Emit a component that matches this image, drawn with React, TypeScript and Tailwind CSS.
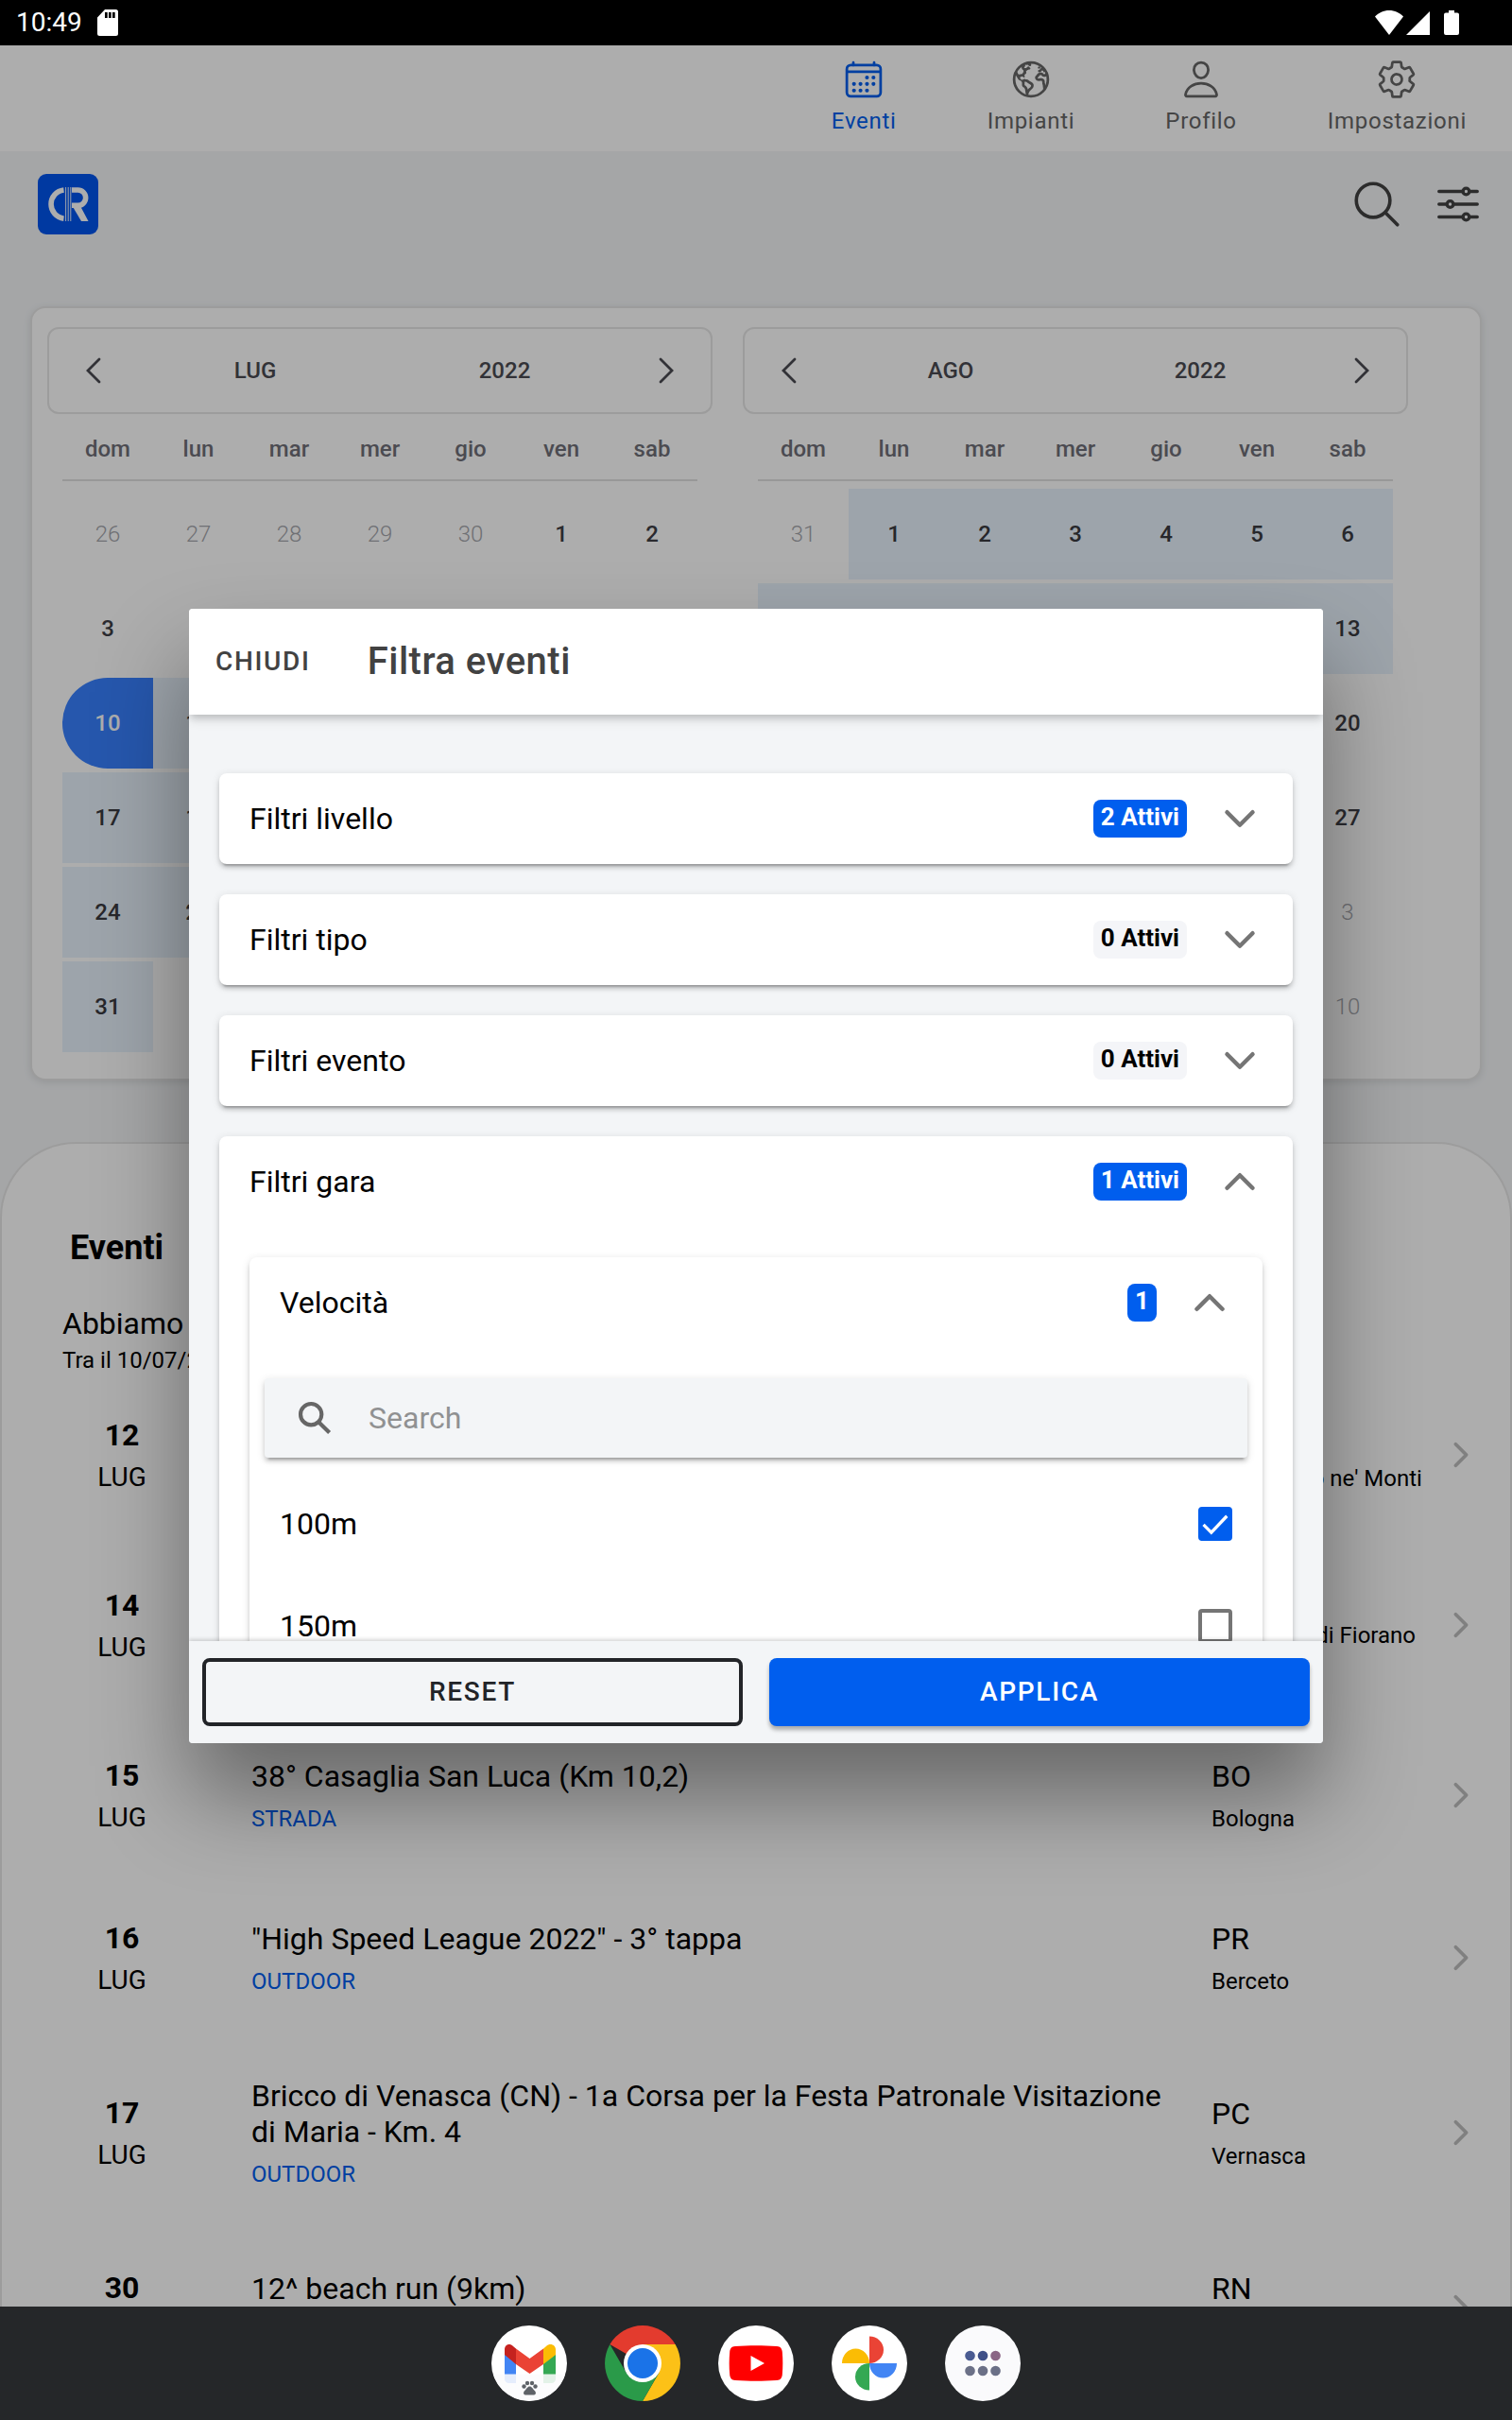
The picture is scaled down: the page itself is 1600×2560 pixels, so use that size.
import { useState, type ReactNode } from "react";
import {
  IoCalendarOutline,
  IoChevronDown,
  IoChevronForward,
  IoChevronUp,
  IoEarthOutline,
  IoOptionsOutline,
  IoPersonOutline,
  IoSearchOutline,
  IoSearchSharp,
  IoSettingsOutline
} from "react-icons/io5";

type DayKind = "out" | "in" | "range" | "start";

type Month = {
  label: string;
  year: string;
  days: number[];
  kinds: DayKind[];
};

const tabs = [
  { label: "Eventi", icon: IoCalendarOutline, active: true },
  { label: "Impianti", icon: IoEarthOutline, active: false },
  { label: "Profilo", icon: IoPersonOutline, active: false },
  { label: "Impostazioni", icon: IoSettingsOutline, active: false }
];

const weekdays = ["dom", "lun", "mar", "mer", "gio", "ven", "sab"];

const fill = (count: number, kind: DayKind): DayKind[] => Array(count).fill(kind);
const span = (from: number, to: number) => Array.from({ length: to - from + 1 }, (_, i) => from + i);

const months: Month[] = [
  {
    label: "LUG",
    year: "2022",
    days: [...span(26, 30), ...span(1, 31), ...span(1, 6)],
    kinds: [...fill(5, "out"), ...fill(9, "in"), "start", ...fill(21, "range"), ...fill(6, "out")]
  },
  {
    label: "AGO",
    year: "2022",
    days: [31, ...span(1, 31), ...span(1, 10)],
    kinds: ["out", ...fill(13, "range"), ...fill(18, "in"), ...fill(10, "out")]
  }
];

const dayStyles: Record<DayKind, string> = {
  out: "font-light text-[#a4a5ab]",
  in: "font-medium text-[#3f3f46]",
  range: "bg-[#e7f2fd] font-medium text-[#3a3a40]",
  start: "rounded-l-full bg-[#3880ff] font-medium text-white"
};

const events = [
  { day: "12", title: "Meeting Città di Castelnovo", kind: "OUTDOOR", province: "RE", place: "Castelnovo ne' Monti" },
  { day: "14", title: "Trofeo delle Ceramiche", kind: "STRADA", province: "MO", place: "Spezzano di Fiorano Modenese" },
  { day: "15", title: "38° Casaglia San Luca (Km 10,2)", kind: "STRADA", province: "BO", place: "Bologna" },
  { day: "16", title: '"High Speed League 2022" - 3° tappa', kind: "OUTDOOR", province: "PR", place: "Berceto" },
  {
    day: "17",
    title: "Bricco di Venasca (CN) - 1a Corsa per la Festa Patronale Visitazione di Maria - Km. 4",
    kind: "OUTDOOR",
    province: "PC",
    place: "Vernasca"
  },
  { day: "30", title: "12^ beach run (9km)", kind: "STRADA", province: "RN", place: "Rimini" }
];

const filters = [
  { label: "Filtri livello", active: 2 },
  { label: "Filtri tipo", active: 0 },
  { label: "Filtri evento", active: 0 }
];

const cardShadow =
  "shadow-[0_6px_2px_-4px_rgba(0,0,0,0.2),0_4px_4px_0_rgba(0,0,0,0.14),0_2px_10px_0_rgba(0,0,0,0.12)]";

function StatusBar() {
  return (
    <div className="flex h-12 shrink-0 items-center bg-black pl-[17px] pr-14 text-white">
      <span className="text-[28px] leading-8">10:49</span>
      <svg className="ml-4 h-7 w-[22px]" viewBox="0 0 22 28" fill="currentColor">
        <path
          fillRule="evenodd"
          d="M8 0h11.500a2.500 2.500 0 0 1 2.500 2.500v23a2.500 2.500 0 0 1-2.500 2.500h-17A2.500 2.500 0 0 1 0 25.500V8.500zM8 3v6h2.700V3zm4 0v6h2.700V3zm4 0v6h2.700V3z"
        />
      </svg>
      <div className="ml-auto flex items-center gap-[3px]">
        <svg className="h-[26px] w-[30px]" viewBox="0 0 30 26" fill="currentColor">
          <path d="M15 0C9 0 4 2.400 0 6.500L15 26 30 6.500C26 2.400 21 0 15 0z" />
        </svg>
        <svg className="h-[26px] w-[25px]" viewBox="0 0 25 26" fill="currentColor">
          <path d="M25 1v25H0z" />
        </svg>
        <svg className="ml-3 h-[26px] w-4" viewBox="0 0 16 26" fill="currentColor">
          <path d="M5 0h6v2.500h3A2 2 0 0 1 16 4.500V24a2 2 0 0 1-2 2H2a2 2 0 0 1-2-2V4.500a2 2 0 0 1 2-2h3z" />
        </svg>
      </div>
    </div>
  );
}

function Logo() {
  return (
    <svg className="size-16" viewBox="0 0 64 64" role="img" aria-label="Calendario Running">
      <rect width="64" height="64" rx="9" fill="#0055ee" />
      <g fill="none" stroke="#fff">
        <path d="M27.500 17A15.200 15.200 0 0 0 27.500 47.200" strokeWidth="5.600" />
        <path d="M29.600 14v36M32.200 14v36M34.800 14v36" strokeWidth="0.900" />
        <path d="M36 17h6.500a8 8 0 0 1 0 16.300H36" strokeWidth="5.600" />
      </g>
      <path d="M36 33h8.500L53.500 50H46z" fill="#fff" />
    </svg>
  );
}

function NavBar() {
  return (
    <nav className="flex h-28 shrink-0 justify-end bg-white">
      {tabs.map(({ label, icon: Icon, active }) => (
        <a
          key={label}
          href="#"
          className={`flex flex-col items-center px-12 pt-3.5 ${active ? "text-[#005eee]" : "text-[#666]"}`}
        >
          <Icon className="size-11" />
          <span className="mt-2 text-2xl leading-7 tracking-[0.03em]">{label}</span>
        </a>
      ))}
    </nav>
  );
}

function Arrow({ back }: { back?: boolean }) {
  return (
    <svg className="h-7 w-4" viewBox="0 0 16 28" fill="none" stroke="currentColor" strokeWidth="2.800" strokeLinecap="round">
      <path d={back ? "M14 2L2 14l12 12" : "M2 2l12 12L2 26"} />
    </svg>
  );
}

function MonthCalendar({ month }: { month: Month }) {
  const weeks = span(0, 5).map((w) => span(w * 7, w * 7 + 6));

  return (
    <section className="min-w-0 max-w-[704px] flex-1">
      <div className="mb-px flex h-[92px] items-center rounded-xl border-2 border-[#e6e6e6] text-2xl font-medium text-[#4b4b52]">
        <button className="flex h-full w-[86px] items-center justify-center pl-2" aria-label="Mese precedente">
          <Arrow back />
        </button>
        <button className="h-full flex-1">{month.label}</button>
        <button className="h-full flex-1">{month.year}</button>
        <button className="flex h-full w-[86px] items-center justify-center pr-2" aria-label="Mese successivo">
          <Arrow />
        </button>
      </div>
      <div className="px-4">
        <table className="w-full table-fixed border-separate border-spacing-x-0 border-spacing-y-1 text-2xl">
          <thead>
            <tr>
              {weekdays.map((day) => (
                <th key={day} className="p-0 pb-1 font-medium text-[#6f6f78]">
                  <div className="flex h-[66px] items-center justify-center border-b-2 border-[#e0e0e0]">{day}</div>
                </th>
              ))}
            </tr>
          </thead>
          <tbody>
            {weeks.map((week) => (
              <tr key={week[0]}>
                {week.map((i) => (
                  <td key={i} className={`h-24 p-0 text-center ${dayStyles[month.kinds[i]]}`}>
                    {month.days[i]}
                  </td>
                ))}
              </tr>
            ))}
          </tbody>
        </table>
      </div>
    </section>
  );
}

function EventList() {
  return (
    <section className="mt-[65px] rounded-t-[80px] border-2 border-b-0 border-[#e6e6e6] bg-white pt-[89px]">
      <h2 className="pl-[72px] text-4xl leading-[42px] font-bold">Eventi</h2>
      <div className="mt-10 pl-16">
        <p className="text-[32px] leading-[38px]">Abbiamo trovato 20 eventi</p>
        <p className="mt-1.5 text-2xl leading-7">Tra il 10/07/2022 e il 13/08/2022</p>
      </div>
      <ul>
        {events.map((event) => (
          <li key={event.day}>
            <a href="#" className="flex min-h-[172px] items-center py-[41px] pr-8 pl-16">
              <div className="w-[126px] shrink-0 text-center">
                <div className="text-[32px] leading-[38px] font-bold">{event.day}</div>
                <div className="mt-2.5 text-[28px] leading-8">LUG</div>
              </div>
              <div className="ml-[74px] flex-1">
                <h3 className="text-[32px] leading-[38px]">{event.title}</h3>
                <p className="mt-3 text-2xl leading-7 text-[#005eee]">{event.kind}</p>
              </div>
              <div className="ml-8 w-[228px] shrink-0">
                <div className="text-[32px] leading-[38px]">{event.province}</div>
                <div className="mt-3 text-2xl leading-7">{event.place}</div>
              </div>
              <IoChevronForward className="ml-4 size-10 shrink-0 text-[#bdbdbd]" />
            </a>
          </li>
        ))}
      </ul>
    </section>
  );
}

function Badge({ active, children }: { active: boolean; children: ReactNode }) {
  return (
    <span
      className={`h-10 rounded-lg px-2 pt-[5px] text-[26px] leading-[26px] font-bold ${
        active ? "bg-[#005eee] text-white" : "bg-[#f4f5f8] text-black"
      }`}
    >
      {children}
    </span>
  );
}

function AccordionHeader({ label, badge, active, open }: { label: string; badge: string; active: boolean; open?: boolean }) {
  const Chevron = open ? IoChevronUp : IoChevronDown;

  return (
    <button className="flex h-24 w-full items-center px-8 text-left" aria-expanded={!!open}>
      <span className="flex-1 text-[32px] leading-[38px]">{label}</span>
      <Badge active={active}>{badge}</Badge>
      <Chevron className="ml-8 size-12 text-[#757575]" />
    </button>
  );
}

function RaceOption({ label, defaultChecked = false }: { label: string; defaultChecked?: boolean }) {
  const [checked, setChecked] = useState(defaultChecked);

  return (
    <label className="flex h-[108px] items-center justify-between px-8 text-[32px] leading-[38px]">
      {label}
      <span className="relative size-9">
        <input
          type="checkbox"
          checked={checked}
          onChange={(e) => setChecked(e.target.checked)}
          className="block size-9 appearance-none rounded-sm border-4 border-[#757575] bg-white checked:border-[#005eee] checked:bg-[#005eee]"
        />
        {checked && (
          <svg
            className="pointer-events-none absolute inset-0"
            viewBox="0 0 24 24"
            fill="none"
            stroke="#fff"
            strokeWidth="2.200"
          >
            <path d="M3.700 12.600l5.500 5.500L20.200 6.500" />
          </svg>
        )}
      </span>
    </label>
  );
}

function FilterModal() {
  return (
    <div
      role="dialog"
      aria-modal="true"
      aria-labelledby="filter-title"
      className="flex h-[1200px] max-h-full w-[1200px] max-w-full flex-col overflow-hidden rounded bg-[#f3f5f7] shadow-[0_56px_96px_rgba(0,0,0,0.4)]"
    >
      <header className="relative z-10 flex h-28 shrink-0 items-center bg-white pl-7 text-[#424242] shadow-[0_4px_8px_-2px_rgba(0,0,0,0.2),0_8px_10px_rgba(0,0,0,0.08)]">
        <button className="text-[28px] leading-8 font-medium tracking-[0.06em]">CHIUDI</button>
        <h1 id="filter-title" className="ml-[60px] text-[40px] leading-[48px] font-medium tracking-[0.0125em]">
          Filtra eventi
        </h1>
      </header>
      <div className="min-h-0 flex-1 overflow-hidden px-8 pt-[62px]">
        <div className="flex flex-col gap-8">
          {filters.map((filter) => (
            <section key={filter.label} className={`rounded-lg bg-white ${cardShadow}`}>
              <AccordionHeader label={filter.label} badge={`${filter.active} Attivi`} active={filter.active > 0} />
            </section>
          ))}
          <section className={`rounded-lg bg-white px-8 pb-8 ${cardShadow}`}>
            <div className="-mx-8">
              <AccordionHeader label="Filtri gara" badge="1 Attivi" active open />
            </div>
            <div className={`mt-8 rounded-lg bg-white ${cardShadow}`}>
              <AccordionHeader label="Velocità" badge="1" active open />
              <div className={`mx-4 mt-8 mb-4 flex h-[84px] items-center rounded bg-[#f3f5f7] pl-8 ${cardShadow}`}>
                <IoSearchSharp className="size-[42px] text-[#666]" />
                <input
                  type="search"
                  aria-label="Search"
                  placeholder="Search"
                  className="ml-9 h-full flex-1 bg-transparent text-[32px] outline-none placeholder:text-[#909192]"
                />
              </div>
              <RaceOption label="100m" defaultChecked />
              <RaceOption label="150m" />
            </div>
          </section>
        </div>
      </div>
      <footer className="relative z-10 grid h-[108px] shrink-0 grid-cols-2 items-center gap-7 bg-[#f3f5f7] px-3.5 text-[28px] font-medium tracking-[0.06em] shadow-[0_-2px_4px_rgba(0,0,0,0.16)]">
        <button className="h-[72px] rounded-lg border-4 border-[#222428] text-[#222428]">RESET</button>
        <button className="h-[72px] rounded-lg bg-[#005eee] text-white shadow-[0_4px_4px_rgba(0,0,0,0.3)]">
          APPLICA
        </button>
      </footer>
    </div>
  );
}

function GmailIcon() {
  return (
    <svg className="size-20" viewBox="0 0 80 80">
      <circle cx="40" cy="40" r="40" fill="#fff" />
      <path d="M14 30h12v31H18.500A4.500 4.500 0 0 1 14 56.500z" fill="#4285f4" />
      <path d="M55 30h13v26.500A4.500 4.500 0 0 1 63.500 61H55z" fill="#34a853" />
      <path d="M55 24.500l3-2.500c4-4 10-1.500 10 3.500V31L55 41z" fill="#fbbc04" />
      <path d="M26 24.500L40.500 35 55 24.500V41L40.500 51 26 41z" fill="#ea4335" />
      <path d="M26 24.500L23 22c-4-4-9-1.500-9 3.500V31l12 10z" fill="#c5221f" />
      <path d="M1.800 51.500h76.400A40 40 0 0 1 1.800 51.500z" fill="#fcfcfd" fillOpacity="0.880" />
      <g fill="#5f6368">
        <circle cx="34.500" cy="64.500" r="2.200" />
        <circle cx="38" cy="61" r="2.200" />
        <circle cx="43" cy="61" r="2.200" />
        <circle cx="46.500" cy="64.500" r="2.200" />
        <path d="M40.500 64.500c2.500 0 3 2.500 5 4.200 2.500 2.300 1.500 4.800-1 4.800h-8c-2.500 0-3.500-2.500-1-4.800 2-1.700 2.500-4.200 5-4.200z" />
      </g>
    </svg>
  );
}

function ChromeIcon() {
  return (
    <svg className="size-20" viewBox="0 0 80 80">
      <path d="M40 40L5.400 20a40 40 0 0 1 69.200 0z" fill="#e33b2e" />
      <path d="M40 20h34.600A40 40 0 0 1 40 80l17.300-30z" fill="#fcc117" />
      <path d="M5.400 20l17.300 30L40 60l17.300-10L40 80A40 40 0 0 1 5.400 20z" fill="#2a9a49" />
      <circle cx="40" cy="40" r="20" fill="#fff" />
      <circle cx="40" cy="40" r="16" fill="#1a73e8" />
    </svg>
  );
}

function YouTubeIcon() {
  return (
    <svg className="size-20" viewBox="0 0 80 80">
      <circle cx="40" cy="40" r="40" fill="#fff" />
      <path
        d="M18 22c14-1 30-1 44 0 4 .3 5.500 2.500 5.800 6 .7 8 .7 16 0 24-.3 3.500-1.800 5.700-5.800 6-14 1-30 1-44 0-4-.3-5.500-2.500-5.800-6-.7-8-.7-16 0-24 .3-3.500 1.800-5.700 5.800-6z"
        fill="#f00"
      />
      <path d="M34.500 32L49 40l-14.500 8z" fill="#fff" />
    </svg>
  );
}

function PhotosIcon() {
  return (
    <svg className="size-20" viewBox="0 0 80 80">
      <circle cx="40" cy="40" r="40" fill="#fff" />
      <path d="M40 11.500a15 14.250 0 0 1 0 28.500z" fill="#ea4335" />
      <path d="M69 40a14.500 15.500 0 0 1-29 0z" fill="#4285f4" />
      <path d="M40 68.500a15 14.250 0 0 1 0-28.500z" fill="#34a853" />
      <path d="M11 40a14.500 15.500 0 0 1 29 0z" fill="#fbbc04" />
    </svg>
  );
}

function AppsIcon() {
  return (
    <svg className="size-20" viewBox="0 0 80 80">
      <circle cx="40" cy="40" r="40" fill="#fafafc" />
      <circle cx="26.500" cy="32" r="5.300" fill="#4a5b92" />
      <circle cx="40" cy="32" r="5.300" fill="#3f5088" />
      <circle cx="53.500" cy="32" r="5.300" fill="#8a6585" />
      <circle cx="26.500" cy="48" r="5.300" fill="#6b7087" />
      <circle cx="40" cy="48" r="5.300" fill="#6b7087" />
      <circle cx="53.500" cy="48" r="5.300" fill="#6b7087" />
    </svg>
  );
}

const dockApps = [
  { name: "Gmail", icon: GmailIcon },
  { name: "Chrome", icon: ChromeIcon },
  { name: "YouTube", icon: YouTubeIcon },
  { name: "Foto", icon: PhotosIcon },
  { name: "App", icon: AppsIcon }
];

export default function App() {
  return (
    <div className="flex h-screen flex-col overflow-hidden font-[Roboto,sans-serif] text-black">
      <StatusBar />
      <div className="relative min-h-0 flex-1 overflow-hidden bg-[#f3f5f7]">
        <NavBar />
        <header className="flex h-28 items-center justify-between pr-[30px] pl-10">
          <Logo />
          <div className="flex items-center gap-[30px] text-[#424242]">
            <button aria-label="Cerca">
              <IoSearchOutline className="size-[58px]" />
            </button>
            <button aria-label="Filtra">
              <IoOptionsOutline className="size-[54px]" />
            </button>
          </div>
        </header>
        <main>
          <div className="mx-8 mt-[52px] flex gap-8 rounded-2xl border-2 border-[#e6e6e6] bg-white px-4 pt-5 pb-6 shadow-[0_2px_8px_rgba(0,0,0,0.1)]">
            {months.map((month) => (
              <MonthCalendar key={month.label} month={month} />
            ))}
          </div>
          <EventList />
        </main>
        <div className="absolute inset-0 flex items-center justify-center bg-black/32">
          <FilterModal />
        </div>
      </div>
      <div className="flex h-[120px] shrink-0 items-center justify-center gap-10 bg-[#252729]">
        {dockApps.map(({ name, icon: Icon }) => (
          <button key={name} aria-label={name}>
            <Icon />
          </button>
        ))}
      </div>
    </div>
  );
}
